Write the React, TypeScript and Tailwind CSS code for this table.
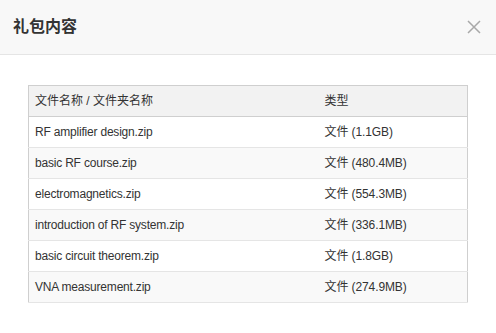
import React from "react";

const files = [
  { name: "RF amplifier design.zip", size: "文件 (1.1GB)" },
  { name: "basic RF course.zip", size: "文件 (480.4MB)" },
  { name: "electromagnetics.zip", size: "文件 (554.3MB)" },
  { name: "introduction of RF system.zip", size: "文件 (336.1MB)" },
  { name: "basic circuit theorem.zip", size: "文件 (1.8GB)" },
  { name: "VNA measurement.zip", size: "文件 (274.9MB)" },
];

export default function App() {
  return (
    <div
      className="w-[496px] h-[333px] bg-white text-[#333]"
      style={{ fontFamily: '"Liberation Sans", "Noto Sans CJK SC", sans-serif' }}
    >
      <div className="h-[55px] bg-[#f8f8f8] border-b border-[#e5e5e5] flex items-center justify-between pl-[13px] pr-[14px]">
        <h2 className="text-[16px] font-bold text-[#333] leading-none">礼包内容</h2>
        <button className="w-[16px] h-[16px] flex items-center justify-center">
          <svg width="14" height="14" viewBox="0 0 14 14" fill="none">
            <path d="M1 1L13 13M13 1L1 13" stroke="#a8a8a8" strokeWidth="1.5" />
          </svg>
        </button>
      </div>
      <div className="px-[28px] pt-[30px]">
        <table className="w-[440px] border border-[#cfcfcf] border-collapse text-[12px] table-fixed">
          <thead>
            <tr className="bg-[#f2f2f2] h-[31px]">
              <th className="w-[290px] text-left font-normal pl-[6px] border-b border-[#cfcfcf]">文件名称 / 文件夹名称</th>
              <th className="text-left font-normal pl-[6px] border-b border-[#cfcfcf]">类型</th>
            </tr>
          </thead>
          <tbody>
            {files.map((f, i) => (
              <tr
                key={f.name}
                className={`h-[31px] border-b border-[#e5e5e5] ${i % 2 === 1 ? "bg-[#f9f9f9]" : "bg-white"}`}
              >
                <td className="pl-[6px] tracking-[-0.2px]">{f.name}</td>
                <td className="pl-[6px] tracking-[-0.1px]">{f.size}</td>
              </tr>
            ))}
          </tbody>
        </table>
      </div>
    </div>
  );
}
